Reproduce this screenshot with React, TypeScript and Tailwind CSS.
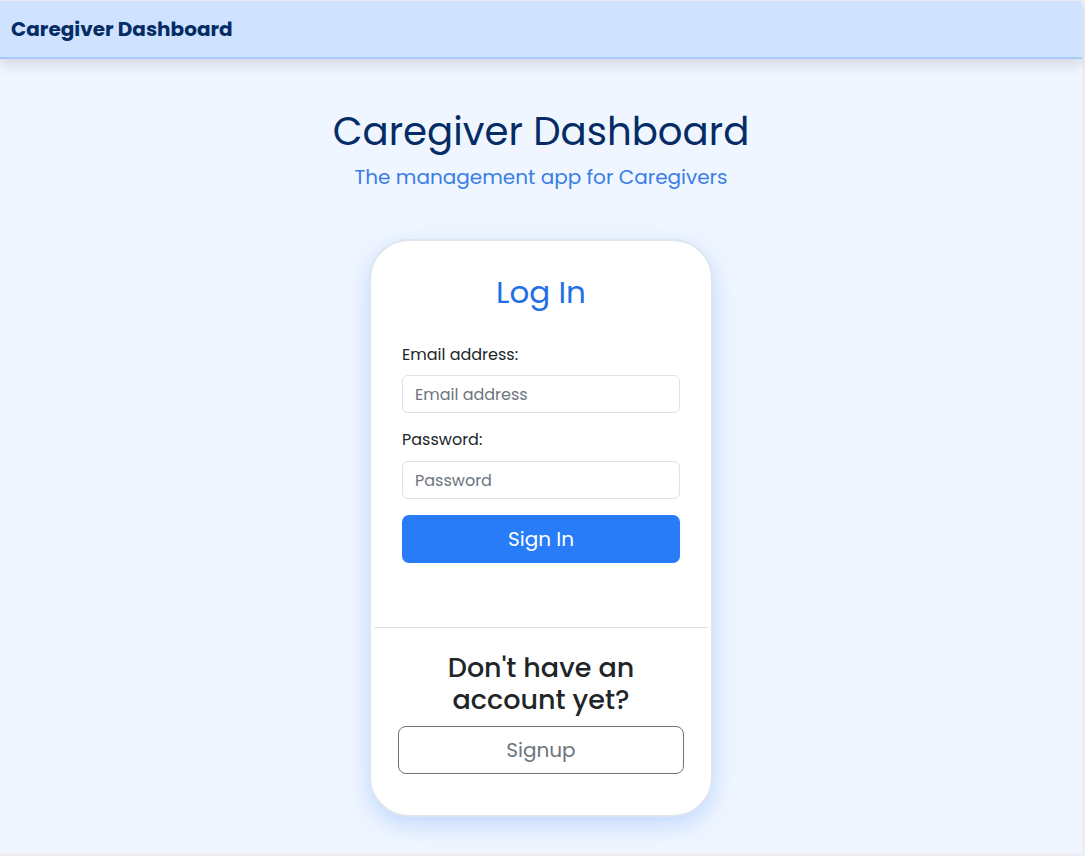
export default function App() {
  return (
    <div
      className="min-h-[856px] bg-[#eceef2] pt-px"
      style={{ fontFamily: "Poppins, 'Open Sans', 'Noto Sans', sans-serif" }}
    >
      <div className="w-[1082px] h-[852px] bg-[#f0f6ff] flex flex-col">
        {/* header */}
        <header className="h-[58px] bg-[#cfe2ff] border-b-2 border-[#a6c8fb] shadow-[0_6px_12px_rgba(0,0,0,0.12)] flex items-center px-[11px]">
          <span className="text-[20px] font-bold text-[#052c65]">
            Caregiver Dashboard
          </span>
        </header>

        <main className="flex flex-col items-center">
          <h1 className="mt-[50px] text-[38.7px] leading-[46px] text-[#052c65]">
            Caregiver Dashboard
          </h1>
          <p className="mt-[7px] text-[20px] leading-[30px] text-[#3a7de6]">
            The management app for Caregivers
          </p>

          {/* login card */}
          <div className="mt-[47px] w-[344px] bg-white border-2 border-[#dfe5ee] rounded-[40px] shadow-[0_8px_24px_rgba(61,139,253,0.28)] flex flex-col">
            <div className="px-[31px] pt-[31px] pb-[64px]">
              <h2 className="text-center text-[31px] leading-[40px] text-[#1f6fe8]">
                Log In
              </h2>
              <form className="mt-[32px] flex flex-col">
                <label className="text-[16px] leading-[22px] text-[#212529]">
                  Email address:
                </label>
                <input
                  type="email"
                  placeholder="Email address"
                  className="mt-[9px] h-[38px] px-[12px] rounded-[6px] border border-[#dee2e6] text-[16px] text-[#212529] placeholder:text-[#6c757d] outline-none"
                />
                <label className="mt-[16px] text-[16px] leading-[22px] text-[#212529]">
                  Password:
                </label>
                <input
                  type="password"
                  placeholder="Password"
                  className="mt-[10px] h-[38px] px-[12px] rounded-[6px] border border-[#dee2e6] text-[16px] text-[#212529] placeholder:text-[#6c757d] outline-none"
                />
                <button
                  type="button"
                  className="mt-[16px] h-[48px] rounded-[7px] bg-[#287cf8] text-white text-[20px]"
                >
                  Sign In
                </button>
              </form>
            </div>

            <div className="mx-[3px] border-t border-[#dee2e6]" />

            <div className="px-[27px] pt-[24px] pb-[41px] flex flex-col items-center">
              <h3 className="text-center text-[27px] leading-[32px] font-medium text-[#212529] px-[28px]">
                Don't have an account yet?
              </h3>
              <button
                type="button"
                className="mt-[10px] w-full h-[48px] rounded-[8px] border border-[#6c757d] text-[20px] text-[#6c757d] bg-white"
              >
                Signup
              </button>
            </div>
          </div>
        </main>
      </div>
    </div>
  );
}
